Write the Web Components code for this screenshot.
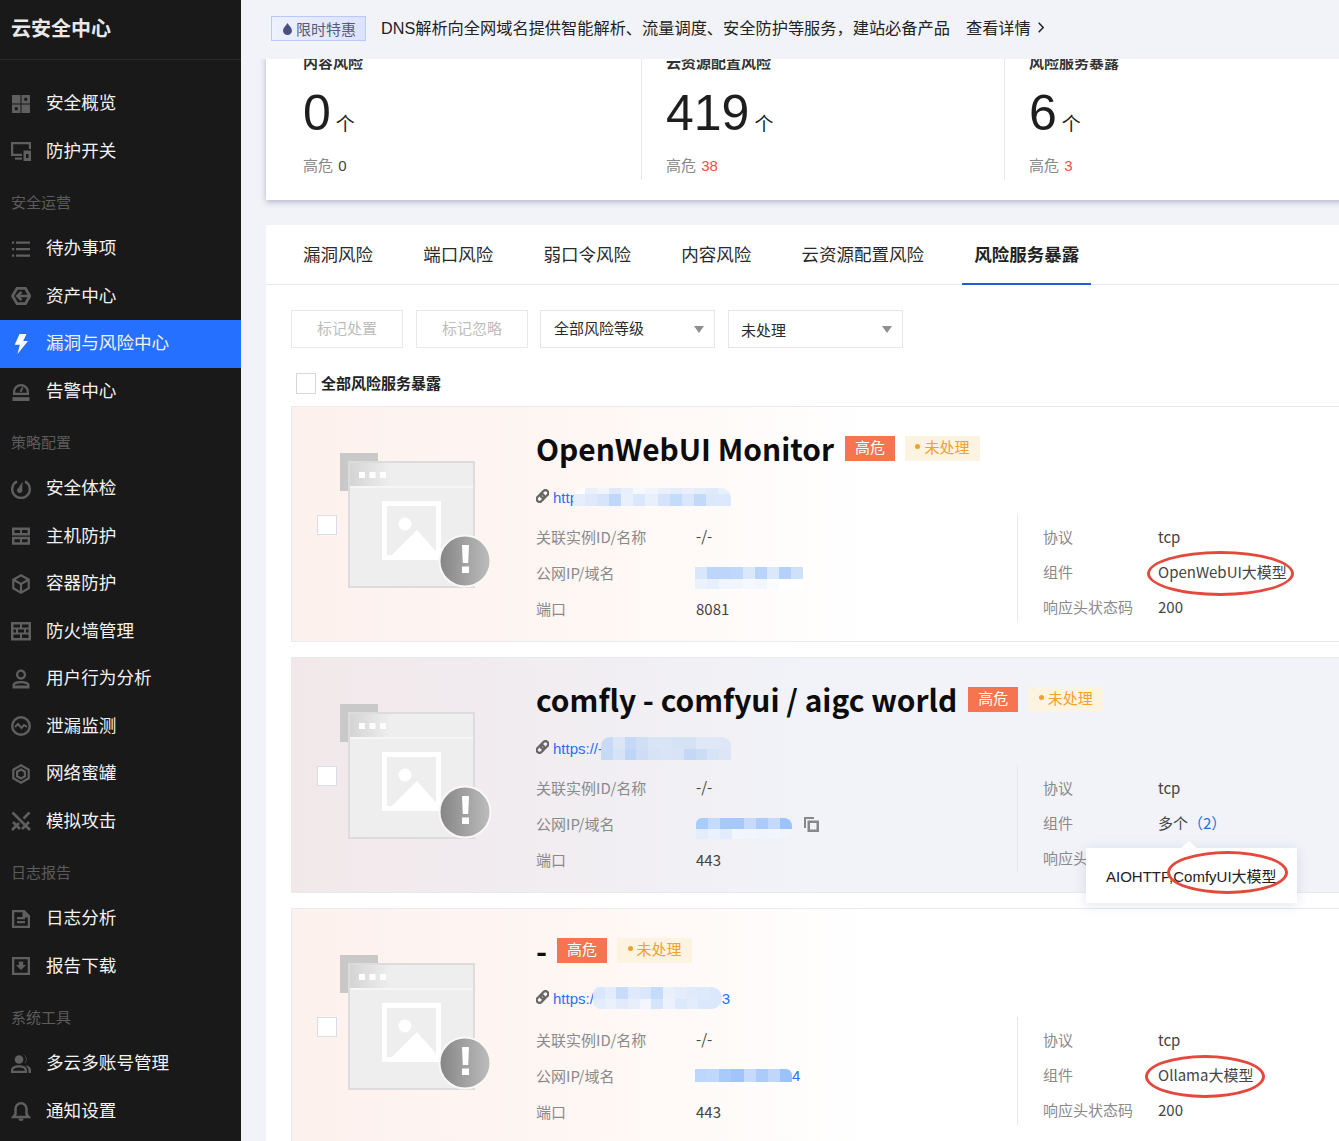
<!DOCTYPE html>
<html lang="zh"><head><meta charset="utf-8"><title>云安全中心</title>
<style>
html,body{margin:0;padding:0;background:#f2f3f8;overflow:hidden}
body{font-family:"Liberation Sans","Noto Sans CJK SC",sans-serif}
app-shell{height:1141px}
</style></head><body>
<app-shell>
  <side-nav slot="nav" brand="云安全中心">
    <nav-item icon="grid" label="安全概览"></nav-item>
    <nav-item icon="screen" label="防护开关"></nav-item>
    <nav-group label="安全运营"></nav-group>
    <nav-item icon="list" label="待办事项"></nav-item>
    <nav-item icon="asset" label="资产中心"></nav-item>
    <nav-item icon="bolt" label="漏洞与风险中心" active></nav-item>
    <nav-item icon="alarm" label="告警中心"></nav-item>
    <nav-group label="策略配置"></nav-group>
    <nav-item icon="gauge" label="安全体检"></nav-item>
    <nav-item icon="server" label="主机防护"></nav-item>
    <nav-item icon="cube" label="容器防护"></nav-item>
    <nav-item icon="wall" label="防火墙管理"></nav-item>
    <nav-item icon="user" label="用户行为分析"></nav-item>
    <nav-item icon="pulse" label="泄漏监测"></nav-item>
    <nav-item icon="hex" label="网络蜜罐"></nav-item>
    <nav-item icon="swords" label="模拟攻击"></nav-item>
    <nav-group label="日志报告"></nav-group>
    <nav-item icon="doc" label="日志分析"></nav-item>
    <nav-item icon="down" label="报告下载"></nav-item>
    <nav-group label="系统工具"></nav-group>
    <nav-item icon="users" label="多云多账号管理"></nav-item>
    <nav-item icon="bell" label="通知设置"></nav-item>
  </side-nav>
  <promo-banner slot="top"></promo-banner>
  <stat-panel>
    <stat-col label="内容风险" num="0" high="0" first></stat-col>
    <stat-col label="云资源配置风险" num="419" high="38" hot></stat-col>
    <stat-col label="风险服务暴露" num="6" high="3" hot></stat-col>
  </stat-panel>
  <tab-panel>
    <risk-tabs></risk-tabs>
    <filter-bar></filter-bar>
    <risk-card name="OpenWebUI Monitor" tone="warm" status="200" port="8081">
      <url-line slot="url">http://<mosaic-patch over="18" rh="6,12" w="158" radius="10px 10px 0 0" cells="fdfdfe e9f0fc f0f5fd dfe9fb e6effc f6f8fd f0f4fd e8f0fc e4edfb e8f0fc e4edfb e0eafb e8f0fc|e6eefb dfe9fb d7e5fb bfd7fa e9f0fc dbe7fb e9f0fc d6e4fb c4dbfa d9e6fb c2d9fa dbe7fb dce8fb"></mosaic-patch></url-line>
      <mosaic-patch slot="ip" rh="12,10" w="108" dy="5" radius="0" over="1" cells="d9e7fb bdd5fb bdd5fb bfd7fb dbe8fc b9d3fb dbe8fc b5d0fb cfe0fb|ebf2fd e7effd f1f5fe f0f5fe f5f8fe f3f6fe fafbff ffffff ffffff"></mosaic-patch>
      <span slot="comp">OpenWebUI大模型</span>
      <mark-ring slot="over" style="--l:855px;--t:144px;--w:147px;--h:45px"></mark-ring>
    </risk-card>
    <risk-card name="comfly - comfyui / aigc world" tone="cool" port="443">
      <url-line slot="url">https://-<mosaic-patch over="2" rh="12,11" w="130" radius="9px 9px 0 0" cells="c8daf5 dbe5f5 c5d8f5 d1dff5 d9e4f6 d9e4f6 d5e1f5 d5e2f6 e0e8f7 e0e8f7 dfe7f7|c6d9f5 d6e2f6 bfd5f5 ceddf5 d6e2f6 d9e4f6 d8e3f6 c4d7f5 cbdcf5 d7e3f6 dde6f7"></mosaic-patch></url-line>
      <ip-with-copy slot="ip"><mosaic-patch rh="11,10" w="96" dy="5" radius="6px 8px 10px 0" cells="a8ccfb c5dbfb a6c8fa a6c8fa c6dbfb abcbfb c5dafb 9cc3fb|e3edfc e9f1fd e2ecfd f3f6fe f1f5fd f0f4fe f1f5fe f0f5fd"></mosaic-patch></ip-with-copy>
      <count-value slot="comp" text="多个" n="（2）"></count-value>
      <hover-tip slot="over"></hover-tip>
      <mark-ring slot="over" style="--l:875px;--t:193px;--w:121px;--h:43px"></mark-ring>
    </risk-card>
    <risk-card name="-" tone="warm" status="200" port="443" last>
      <url-line slot="url">https:/<mosaic-patch over="1" rh="12,10" w="129" radius="8px 12px 12px 8px" cells="d9e6fb e3ecfc c8dcfa dfe9fb d9e6fb c5dbfa e9f0fc e4edfc e0eafb ddeafb dbe8fb|e3ecfc eaf1fd e2ebfb e7eefc f2f6fe d5e4fb ecf2fd dce8fc e2ecfc dbe8fb dbe8fb"></mosaic-patch>3</url-line>
      <ip-with-copy slot="ip" tail="4"><mosaic-patch rh="13" w="97" radius="0 6px 0 0" over="1" cells="bcd6fc c0d8fc a9cafb a1c5fb c5dafc abcbfb c0d7fb 9ac2fc"></mosaic-patch></ip-with-copy>
      <span slot="comp">Ollama大模型</span>
      <mark-ring slot="over" style="--l:853px;--t:146px;--w:120px;--h:43px"></mark-ring>
    </risk-card>
  </tab-panel>
</app-shell>
<script>
const CJK='"Noto Sans CJK SC","Liberation Sans",sans-serif';
const ARIAL='"Liberation Sans","Noto Sans CJK SC",sans-serif';
function shadow(el,html){el.attachShadow({mode:'open'}).innerHTML=html;}
const S=(w,d)=>`<path fill="none" stroke="currentColor" stroke-width="${w}" d="${d}"/>`;
const ICONS={
 grid:'<path d="M1 1h8.500v8.500H1z"/><path fill-rule="evenodd" d="M10.500 1H19v8.500h-8.500zM13.300 3.800v2.900h2.900V3.800zM1 10.500h8.500V19H1zM3.800 13.300v2.900h2.900v-2.900z"/><path d="M10.500 10.500H19V19h-8.500z"/>',
 screen:S(2.200,'M11 13.900H1.100V2.100h17.800v6')+'<path d="M4 16.500h7v2.200H4z"/><path fill-rule="evenodd" d="M12.500 9.500H20V20h-7.500zM15 13v4h2.500v-4z"/>',
 list:'<path d="M1 2.500h2.200v2.200H1zM5 2.500h14v2.200H5zM1 9h2.200v2.200H1zM5 9h14v2.200H5zM1 15.500h2.200v2.200H1zM5 15.500h14v2.200H5z"/>',
 asset:S(2.800,'M6 2.300h8.500L18.800 10l-4.300 7.700H6L1.500 10z')+S(2.600,'M10.500 5.800L6.300 10l4.200 4.200M6.500 10H19'),
 bolt:'<path d="M8.500 0h7L12.200 7H17L6.500 20l2.400-9.300H3.700z"/>',
 alarm:'<path fill-rule="evenodd" d="M2 14v-3a8 8 0 0 1 16 0v3zM4.200 11.800h11.600V11a5.800 5.800 0 0 0-11.600 0zM8.500 10.500l2.500-4.500 1.500.8-2 4.200z"/><path d="M1.500 16.200h17V20h-17z"/>',
 gauge:S(2.400,'M6 2.400a8.800 8.800 0 1 0 8 0')+'<path d="M11.500 2.500l-.2 8a2.700 2.700 0 1 1-3.800-1.600z"/>',
 server:'<path fill-rule="evenodd" d="M1 1.500h18v8H1zM3.500 4v3H9V4zM11 4v3h5.500V4zM1 10.800h18v8H1zM3.500 13.300v3H9v-3zM11 13.300v3h5.500v-3z"/>',
 cube:S(2.200,'M10 1.300l7.700 4.400v8.600L10 18.700l-7.700-4.400V5.700zM2.500 5.800L10 10l7.500-4.200M10 10v8.500'),
 wall:'<path fill-rule="evenodd" d="M0 1h20v18.500H0zM2.500 3.500v3H9v-3zM11 3.500v3h6.500v-3zM2.500 8.500v3H5v-3zM7 8.500v3h6v-3zM15 8.500v3h2.500v-3zM2.500 13.500v3.500H9v-3.500zM11 13.500v3.500h6.500v-3.500z"/>',
 user:S(2.300,'M10 1.700a3.900 3.900 0 1 1 0 7.800 3.900 3.900 0 0 1 0-7.800z')+'<path fill-rule="evenodd" d="M1.500 19.500V16c0-2.500 3.300-4 8.500-4s8.500 1.500 8.500 4v3.500zM3.800 16.500h12.400V16c0-.6-2-1.800-6.200-1.800S3.800 15.400 3.800 16z"/>',
 pulse:S(2.400,'M10 1.200a8.800 8.800 0 1 1 0 17.600 8.800 8.800 0 0 1 0-17.600z')+S(2,'M4 11l3-3 3.500 4 2.500-3 3 1.800'),
 hex:S(2.200,'M10 1.300l7.700 4.400v8.600L10 18.700l-7.700-4.400V5.700z')+S(2.200,'M10 5.500l3.900 2.200v4.600L10 14.500l-3.900-2.200V7.700z'),
 swords:S(2.600,'M1.500 1.500L13.500 13.500M11 18l7-7M15 15l4 4M18.500 1.500L12.500 7.500M8 12l-2.500 2.500M2 11l7 7M5 15l-4 4'),
 doc:S(2.300,'M12.500 2.100H2.100v15.800h15.800V7.500z')+'<path d="M6 8h8v2.200H6zM6 12h8v2.200H6z"/><path d="M11.500 1h2l5.500 5.500v2h-7.500z"/>',
 down:'<path fill-rule="evenodd" d="M1 1h18v18H1zM3.300 3.300v13.400h13.400V3.300zM7.800 5.500h4.400V9H15l-5 5-5-5h2.800z"/>',
 users:'<circle cx="8" cy="5.500" r="4.300"/><path fill-rule="evenodd" d="M0 19v-2.500C0 13 3.500 11.300 8 11.300s8 1.700 8 5.200V19zM2.200 16.800h11.600v-.3c0-1.800-2-3-5.800-3s-5.800 1.200-5.800 3z"/><path d="M12 .8a5 5 0 0 1 3 4.700 5 5 0 0 1-3 4.700 5 5 0 0 0 .5-9.400zM14 11.300c3.700.3 6 2 6 5.200V19h-2.500v-2.500c0-2-1.300-3.800-3.500-5.200z"/>',
 bell:S(2.500,'M10 2.300a5.500 5.500 0 0 1 5.500 5.500v5.200l2.200 3H2.300l2.200-3V7.800A5.500 5.500 0 0 1 10 2.300z')+'<path d="M7.500 17.500h5a2.500 2.500 0 0 1-5 0z"/>'
};

class AppShell extends HTMLElement{constructor(){super();shadow(this,`<style>
:host{display:grid;grid-template-columns:241px 1fr;grid-template-rows:59px 1fr;width:1339px;overflow:hidden;background:#f2f3f8}
.nav{grid-row:1/3;min-height:0}
.view{overflow:hidden;padding-left:25px;min-width:0}
.view-in{width:1084px;margin-top:-10px}
</style><div class="nav"><slot name="nav"></slot></div><slot name="top"></slot><div class="view"><div class="view-in"><slot></slot></div></div>`);}}

class SideNav extends HTMLElement{constructor(){super();shadow(this,`<style>
:host{display:block;height:100%;background:#191919;color:#fff;overflow:hidden}
.brand{box-sizing:border-box;display:flex;align-items:center;padding:0 0 5px 11px;font:700 20px ${CJK};color:#e8e8e8;border-bottom:1px solid #2a2a2a;height:60px}
.list{display:flex;flex-direction:column;padding-top:20px}
</style><div class="brand">${this.getAttribute('brand')}</div><div class="list"><slot></slot></div>`);}}

class NavItem extends HTMLElement{constructor(){super();const a=this.hasAttribute('active');shadow(this,`<style>
:host{display:flex;align-items:center;height:47.500px;flex:none;padding-left:11px;gap:15px;font:17.600px ${CJK};color:#f2f2f2;background:${a?'#2670ff':'transparent'}}
svg{width:20px;height:20px;fill:currentColor;color:${a?'#fff':'#5f5f5f'};flex:none}
span{margin-bottom:4px}
</style><svg viewBox="0 0 20 20">${ICONS[this.getAttribute('icon')]}</svg><span>${this.getAttribute('label')}</span>`);}}

class NavGroup extends HTMLElement{constructor(){super();shadow(this,`<style>
:host{display:flex;align-items:center;height:50px;flex:none;box-sizing:border-box;padding:3px 0 0 11px;font:15px ${CJK};color:#5c5c5c}
</style>${this.getAttribute('label')}`);}}

class PromoBanner extends HTMLElement{constructor(){super();shadow(this,`<style>
:host{display:flex;align-items:center;height:59px;background:#f2f3f8;padding:0 0 2px 30px;box-sizing:border-box;font:16.220px ${ARIAL};color:#222;position:relative;z-index:2}
.tag{display:flex;align-items:center;gap:4px;width:95px;height:25px;box-sizing:border-box;padding-left:11px;border:1px solid #b9c9fb;background:linear-gradient(90deg,#eef0fd,#dde3ff);font-size:15px;color:#565a7c;margin-right:15px}
.tag svg{width:9px;height:12px;fill:#4a5080}
.t{margin-bottom:3px}
.more{margin:0 0 3px 16px;display:flex;align-items:center;gap:7px}
.more svg{width:6px;height:11px;fill:none;stroke:#222;stroke-width:1.500}
</style><span class="tag"><svg viewBox="0 0 9 12"><path d="M4.500 0C6 2.500 9 5 9 7.800a4.500 4.200 0 0 1-9 0C0 5 3 2.500 4.500 0z"/></svg>限时特惠</span><span class="t">DNS解析向全网域名提供智能解析、流量调度、安全防护等服务，建站必备产品</span><span class="more">查看详情<svg viewBox="0 0 6 11"><path d="M.7.700l4.500 4.800-4.500 4.800"/></svg></span>`);}}

class StatPanel extends HTMLElement{constructor(){super();shadow(this,`<style>
:host{display:flex;background:#fff;height:151px;box-shadow:0 2px 6px rgba(60,70,110,.35);margin-bottom:25px;box-sizing:border-box}
</style><slot></slot>`);}}

class StatCol extends HTMLElement{constructor(){super();const h=this.hasAttribute('hot'),f=this.hasAttribute('first');shadow(this,`<style>
:host{display:block;width:${f?376:363}px;flex:none;box-sizing:border-box;padding-left:${f?37:24}px;height:131px;border-right:1px solid #e8e8ec}
:host(:last-child){border:0}
.l{font:700 15px/20px ${CJK};color:#333;margin-top:3px}
.n{display:flex;align-items:baseline;height:58px;margin-top:12px;font:50px/58px ${ARIAL};color:#1e1e1e}
.n span{font:19px ${CJK};margin-left:5px;color:#222;position:relative;top:1px}
.h{font:15px/20px ${ARIAL};color:#8a8a8a;margin-top:14px}
.h b{font-weight:400;color:${h?'#f34d4d':'#444'};margin-left:1px}
</style><div class="l">${this.getAttribute('label')}</div><div class="n">${this.getAttribute('num')}<span>个</span></div><div class="h">高危 <b>${this.getAttribute('high')}</b></div>`);}}

class TabPanel extends HTMLElement{constructor(){super();shadow(this,`<style>
:host{display:block;background:#fff;padding-bottom:40px}
</style><slot></slot>`);}}

class RiskTabs extends HTMLElement{constructor(){super();const t=['漏洞风险','端口风险','弱口令风险','内容风险','云资源配置风险','风险服务暴露'];shadow(this,`<style>
:host{display:flex;height:60px;box-sizing:border-box;border-bottom:1px solid #e6e8f0;padding-left:25px;gap:26.250px;font:17.500px ${CJK};color:#2a2a2a}
div{padding:0 12px 2px;display:flex;align-items:center;height:60px;box-sizing:border-box;border-bottom:2px solid transparent;white-space:nowrap}
.on{font-weight:700;border-bottom-color:#1f5fd6;color:#222}
</style>${t.map((x,i)=>`<div class="${i==5?'on':''}">${x}</div>`).join('')}`);}}

class FilterBar extends HTMLElement{constructor(){super();shadow(this,`<style>
:host{display:block;padding:25px 0 12px 25px;font:15px ${CJK}}
.row{display:flex;height:38px}
.b{box-sizing:border-box;width:112px;height:38px;border:1px solid #e6e8f0;display:flex;align-items:center;justify-content:center;color:#bdbdbd;margin-right:13px;padding-bottom:3px}
.b+.b{margin-right:12px}
.s{box-sizing:border-box;width:175px;height:38px;border:1px solid #e3e6ef;display:flex;align-items:center;justify-content:space-between;padding:0 10px 3px 13px;color:#2a2a2a;margin-right:13px}
.s i{width:0;height:0;border:5px solid transparent;border-top:7px solid #8f8f8f;border-bottom:0;margin-top:3px}
.s.low{padding-left:12px}
.s.low span{padding-top:4px}
.all{display:flex;align-items:center;height:21px;margin:25px 0 0 5px;font-weight:700;color:#222;gap:5px}
.all span{margin-bottom:3px}
.all i{width:18px;height:19px;border:1px solid #d4d8e6;background:#fff}
</style><div class="row"><div class="b">标记处置</div><div class="b">标记忽略</div><div class="s"><span>全部风险等级</span><i></i></div><div class="s low"><span>未处理</span><i></i></div></div><div class="all"><i></i><span>全部风险服务暴露</span></div>`);}}

class MosaicPatch extends HTMLElement{constructor(){super();
 const w=+this.getAttribute('w'),over=+(this.getAttribute('over')||0),dy=+(this.getAttribute('dy')||0);
 const rows=this.getAttribute('cells').split('|').map(r=>r.trim().split(/\s+/));
 const rh=this.getAttribute('rh').split(',').map(Number);const h=rh.reduce((a,b)=>a+b,0);
 const cols=rows[0].length;
 let cells='';rows.forEach(r=>r.forEach(c=>cells+=`<i style="background:#${c}"></i>`));
 shadow(this,`<style>
:host{display:inline-block;width:${w}px;height:${h}px;flex:none;vertical-align:middle;margin-left:${-over}px;position:relative;top:${dy}px}
div{display:grid;grid-template-columns:repeat(${cols},1fr);grid-template-rows:${rh.map(x=>x+'px').join(' ')};width:100%;height:100%;border-radius:${this.getAttribute('radius')||0};overflow:hidden}
</style><div>${cells}</div>`);}}

class UrlLine extends HTMLElement{constructor(){super();shadow(this,`<style>
:host{display:inline-flex;align-items:center;font:15px ${ARIAL};color:#2670ff;white-space:nowrap}
svg{width:13px;height:14px;margin:-3px 4px 0 0;flex:none;fill:none;stroke:#666;stroke-width:2.300}
</style><svg viewBox="0.500 0 13 14"><g transform="rotate(-45 7 7)"><rect x="0" y="4.200" width="8.500" height="5.600" rx="2.800"/><rect x="5.500" y="4.200" width="8.500" height="5.600" rx="2.800"/></g></svg><slot></slot>`);}}

class IpWithCopy extends HTMLElement{constructor(){super();const t=this.getAttribute('tail');shadow(this,`<style>
:host{display:inline-flex;align-items:center;font:15px ${ARIAL};color:#2670ff}
svg{display:block;fill:#888;margin:1px 0 0 12px}
</style><slot></slot>${t?t:'<svg width="15" height="15" viewBox="0 0 15 15"><path d="M0 0h10v2H2v9H0z"/><path fill-rule="evenodd" d="M3.500 3.500H15V15H3.500zM6 6v6.500h6.500V6z"/></svg>'}`);}}

class CountValue extends HTMLElement{constructor(){super();shadow(this,`<style>
:host{display:inline;color:#444}
b{font-weight:400;color:#1f6fe0}
</style>${this.getAttribute('text')}<b>${this.getAttribute('n')}</b>`);}}

const ART=`<svg width="160" height="136" viewBox="0 0 160 136" style="display:block;overflow:visible">
<defs><linearGradient id="g" x1="0" x2="1"><stop offset="0" stop-color="#858585"/><stop offset="1" stop-color="#bdbdbd"/></linearGradient>
<linearGradient id="f" x1="0" x2="1"><stop offset="0" stop-color="#bfbfbf"/><stop offset="1" stop-color="#eee"/></linearGradient></defs>
<rect x="0" y="0" width="38" height="38" fill="#c9c9c9"/>
<rect x="9" y="9" width="125" height="125" fill="#eee" stroke="#dcdcdc" stroke-width="2"/>
<rect x="10" y="10" width="40" height="24" fill="url(#f)" opacity=".55"/>
<rect x="10" y="33" width="123" height="2" fill="#f6f6f6"/>
<path d="M19 19h6v6h-6zM29.500 19h6v6h-6zM40 19h6v6h-6z" fill="#fff"/>
<path fill="#fff" fill-rule="evenodd" d="M42 48h59v59H42zM47 53v49h49V53z"/>
<circle cx="65" cy="71" r="6.500" fill="#fff"/><path d="M52 102l25-25 22 25z" fill="#fff"/>
<circle cx="125" cy="108" r="25.500" fill="url(#g)" stroke="#fbf7f6" stroke-width="2"/>
<path d="M122 92h7l-.8 18h-5.400zM122 113.500h7v6.500h-7z" fill="#fff"/></svg>`;

class RiskCard extends HTMLElement{constructor(){super();
 const tone=this.getAttribute('tone'),st=this.getAttribute('status'),last=this.hasAttribute('last');
 shadow(this,`<style>
:host{display:flex;position:relative;box-sizing:border-box;height:236px;margin:0 0 15px 25px;border:1px solid #e8eaf0;border-right:0;
 background:${tone==='warm'?'linear-gradient(90deg,#fdf1ed 0,#fef6f3 25%,#fff 55%)':'linear-gradient(90deg,#f2e8ea 0,#f1ecf0 20%,#f1f3f8 50%)'};font:15px ${CJK}}
.left{width:244px;flex:none;box-sizing:border-box;padding:0 0 0 25px;display:flex;align-items:center;gap:3px}
.left i{display:block;width:18px;height:18px;border:1px solid #d8dce8;background:#fff;flex:none;margin-top:2px}
.art{margin-top:-7px}
.body{flex:1;min-width:0;padding-top:25px}
.ti{display:flex;align-items:center;height:36px}
h2{margin:-4px ${last?10:11}px 0 0;font:700 29.900px/36px ${CJK};color:#0c0c0c;white-space:nowrap}
.tag{height:25px;display:flex;align-items:center;justify-content:center;font-size:15px;margin-top:-4px}
.tag b{font-weight:400;margin-bottom:3px;display:flex;align-items:center}
.hi{width:50px;background:#f6744f;color:#fff;margin-right:10px}
.st{width:75px;background:#fdf3e1;color:#f5a02a}
.st b::before{content:"";width:5px;height:5px;border-radius:50%;background:#f5a02a;margin-right:4px}
.url{height:20px;margin-top:${last?18:19}px;display:flex;align-items:center}
.cols{display:flex;margin-top:${last?9:7}px}
.d{display:grid;grid-template-columns:160px 1fr;grid-auto-rows:36.400px;width:481px;align-items:center;margin-top:5px;height:108px}
label{color:#8a8a8a}
.d span,.r span{color:#444;display:flex;align-items:center;line-height:20px}
.r{box-sizing:border-box;height:108px;border-left:1px solid #e6e8ee;padding:6px 0 0 25px;display:grid;grid-template-columns:115px 1fr;grid-auto-rows:35px;align-items:center;flex:1}
label,.d span,.r span{margin-bottom:2px}
</style>
<div class="left"><i></i><div class="art">${ART}</div></div>
<div class="body">
 <div class="ti"><h2>${this.getAttribute('name')}</h2><div class="tag hi"><b>高危</b></div><div class="tag st"><b>未处理</b></div></div>
 <div class="url"><slot name="url"></slot></div>
 <div class="cols">
  <div class="d"><label>关联实例ID/名称</label><span>-/-</span><label>公网IP/域名</label><span><slot name="ip"></slot></span><label>端口</label><span>${this.getAttribute('port')}</span></div>
  <div class="r"><label>协议</label><span>tcp</span><label>组件</label><span><slot name="comp"></slot></span><label>响应头状态码</label><span>${st||''}</span></div>
 </div>
</div><slot name="over"></slot>`);}}

class MarkRing extends HTMLElement{constructor(){super();shadow(this,`<style>
:host{position:absolute;left:var(--l);top:var(--t);width:var(--w);height:var(--h);box-sizing:border-box;border:3px solid #e5483c;border-radius:50%;z-index:5;pointer-events:none}
</style>`);}}

class HoverTip extends HTMLElement{constructor(){super();shadow(this,`<style>
:host{position:absolute;left:794px;top:190px;width:211px;height:55px;background:#fff;box-shadow:0 2px 12px rgba(60,70,110,.14);z-index:4;display:flex;align-items:center;padding:0 0 0 20px;box-sizing:border-box;font:15px ${ARIAL};color:#222;white-space:nowrap}
:host::before{content:"";position:absolute;left:95px;top:-7px;border:8px solid transparent;border-top:0;border-bottom:7px solid #fff}
</style>AIOHTTP,ComfyUI大模型`);}}

[['app-shell',AppShell],['side-nav',SideNav],['nav-item',NavItem],['nav-group',NavGroup],['promo-banner',PromoBanner],['stat-panel',StatPanel],['stat-col',StatCol],['tab-panel',TabPanel],['risk-tabs',RiskTabs],['filter-bar',FilterBar],['mosaic-patch',MosaicPatch],['url-line',UrlLine],['ip-with-copy',IpWithCopy],['count-value',CountValue],['risk-card',RiskCard],['mark-ring',MarkRing],['hover-tip',HoverTip]].forEach(([n,c])=>customElements.define(n,c));
</script>
</body></html>
